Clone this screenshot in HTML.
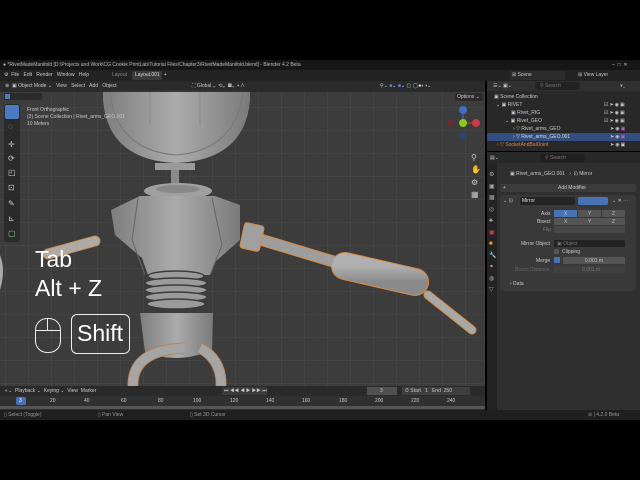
<!DOCTYPE html>
<html><head><meta charset="utf-8">
<style>
*{margin:0;padding:0;box-sizing:border-box}
body{width:640px;height:480px;background:#000;overflow:hidden;font-family:"Liberation Sans",sans-serif;font-size:5px;color:#ccc;position:relative}
.a{position:absolute}
.t{position:absolute;white-space:nowrap;font-size:5px;color:#c8c8c8}
</style></head><body>
<!-- title -->
<div class="a" style="left:0;top:60px;width:640px;height:10px;background:#161616"></div>
<div class="t" style="left:3px;top:62px;color:#bbb">● *RivetMadeManifold [D:\Projects and Work\CG Cookie PrintLab\Tutorial Files\Chapter3\RivetMadeManifold.blend] - Blender 4.2 Beta</div>
<div class="t" style="left:612px;top:62px;color:#bbb">–&nbsp;&nbsp;□&nbsp;&nbsp;✕</div>
<!-- menu bar -->
<div class="a" style="left:0;top:70px;width:640px;height:11px;background:#222"></div>
<div class="t" style="left:4px;top:72px">⚙&nbsp;&nbsp;File&nbsp;&nbsp;&nbsp;Edit&nbsp;&nbsp;&nbsp;Render&nbsp;&nbsp;&nbsp;Window&nbsp;&nbsp;&nbsp;Help</div>
<div class="t" style="left:112px;top:72px;color:#888">Layout</div>
<div class="a" style="left:132px;top:71px;width:30px;height:9px;background:#3a3a3a;border-radius:2px"></div>
<div class="t" style="left:135px;top:72px;color:#ddd">Layout.001&nbsp;&nbsp;&nbsp;+</div>
<div class="a" style="left:510px;top:71px;width:55px;height:9px;background:#2c2c2c"></div>
<div class="t" style="left:512px;top:72px">⊞ Scene</div>
<div class="t" style="left:578px;top:72px">⊞ View Layer</div>
<!-- viewport -->
<div class="a" style="left:0;top:81px;width:485px;height:305px;background:#3c3c3c;background-image:linear-gradient(#444 1px,transparent 1px),linear-gradient(90deg,#444 1px,transparent 1px);background-size:23px 23px;background-position:5px 3px"></div>
<svg class="a" style="left:0;top:81px" width="485" height="305" viewBox="0 81 485 305">
<defs><linearGradient id="g" x1="0" x2="1"><stop offset="0" stop-color="#7e7e7e"/><stop offset=".5" stop-color="#ababab"/><stop offset="1" stop-color="#7a7a7a"/></linearGradient>
<linearGradient id="h" x1="0" y1="0" x2="0" y2="1"><stop offset="0" stop-color="#b0b0b0"/><stop offset="1" stop-color="#8a8a8a"/></linearGradient></defs>
<path d="M103 90 H250 V100 Q245 160 176 163 Q108 160 103 100Z" fill="url(#g)"/>
<path d="M110 90 Q115 150 176 155 Q237 150 243 90" fill="none" stroke="#777" stroke-width="1"/>
<path d="M150 90 V125 M200 90 V125" stroke="#888" stroke-width="1"/>
<rect x="155" y="163" width="40" height="7" fill="#9a9a9a"/>
<rect x="171" y="170" width="8" height="16" fill="#8a8a8a"/>
<ellipse cx="178" cy="191" rx="34" ry="8" fill="#a0a0a0"/>
<ellipse cx="178" cy="189" rx="22" ry="4" fill="#888"/>
<path d="M140 196 H215 L240 205 L240 240 L215 262 L210 275 H148 L142 258 L115 235 L111 210Z" fill="url(#g)"/>
<path d="M138 198 L132 240 L145 275 M212 198 L222 245 L210 275" fill="none" stroke="#666" stroke-width="1"/>
<g fill="#9a9a9a" stroke="#3a3a3a" stroke-width="1.4">
<ellipse cx="176" cy="276" rx="28" ry="5"/><ellipse cx="176" cy="283" rx="31" ry="5"/><ellipse cx="176" cy="290" rx="31" ry="5"/><ellipse cx="176" cy="297" rx="31" ry="5"/><ellipse cx="176" cy="304" rx="29" ry="5"/></g>
<path d="M140 313 H213 L212 350 Q178 365 145 352Z" fill="url(#g)"/>
<path d="M185 348 Q132 350 133 386 M200 348 Q222 360 221 386" fill="none" stroke="#c07a40" stroke-width="11"/>
<path d="M185 348 Q132 350 133 386 M200 348 Q222 360 221 386" fill="none" stroke="#a5a5a5" stroke-width="9.5"/>
<g stroke-linecap="round" fill="none">
<path d="M262 240 L335 262" stroke="#d88a40" stroke-width="12"/>
<path d="M345 266 L415 282" stroke="#d88a40" stroke-width="28"/>
<path d="M428 295 L472 330" stroke="#d88a40" stroke-width="9"/>
<path d="M262 240 L335 262" stroke="#9e9e9e" stroke-width="10"/>
<path d="M345 266 L415 282" stroke="url(#h)" stroke-width="26"/>
<path d="M428 295 L472 330" stroke="#a8a8a8" stroke-width="7"/>
<path d="M48 254 L95 241" stroke="#c98a50" stroke-width="11"/>
<path d="M48 254 L95 241" stroke="#b0aaa5" stroke-width="9"/>
</g>
<rect x="242" y="224" width="20" height="26" rx="3" fill="#a0a0a0" stroke="#d88a40" stroke-width="1" transform="rotate(12 252 237)"/>
<path d="M0 255 Q6 270 0 290" fill="#aaa"/>
</svg>
<div class="a" style="left:0;top:81px;width:485px;height:11px;background:rgba(40,40,40,.9)"></div>
<div class="t" style="left:5px;top:83px">⊕&nbsp;&nbsp;▣ Object Mode ⌄&nbsp;&nbsp;&nbsp;View&nbsp;&nbsp;&nbsp;Select&nbsp;&nbsp;&nbsp;Add&nbsp;&nbsp;&nbsp;Object</div>
<div class="t" style="left:192px;top:83px">⛶ Global ⌄&nbsp;&nbsp;⟲⌄&nbsp;&nbsp;▦⌄&nbsp;&nbsp;▪ ⋀</div>
<div class="t" style="left:380px;top:83px">⚲⌄ <span style="color:#5b8fd8">■</span>⌄ <span style="color:#5b8fd8">■</span>⌄ ▢ ◯<span style="color:#fff">●</span>◐◑⌄</div>
<div class="a" style="left:4px;top:93px;width:38px;height:7px;background:#2b2b2b"></div>
<div class="a" style="left:5px;top:94px;width:5px;height:5px;background:#4a7ac0"></div>
<div class="a" style="left:455px;top:93px;width:28px;height:8px;background:#2b2b2b;border-radius:2px"></div>
<div class="t" style="left:457px;top:94px">Options ⌄</div>
<div class="t" style="left:27px;top:107px">Front Orthographic</div>
<div class="t" style="left:27px;top:114px">(3) Scene Collection | Rivet_arms_GEO.001</div>
<div class="t" style="left:27px;top:121px">10 Meters</div>
<!-- toolbar -->
<div class="a" style="left:4px;top:104px;width:16px;height:138px;background:#2a2a2a;border-radius:3px"></div>
<div class="a" style="left:5px;top:105px;width:14px;height:14px;background:#4a7ac0;border-radius:2px"></div>
<div class="t" style="left:8px;top:122px;font-size:8px">◌</div>
<div class="t" style="left:8px;top:140px;font-size:8px">✛</div>
<div class="t" style="left:8px;top:154px;font-size:8px">⟳</div>
<div class="t" style="left:8px;top:168px;font-size:8px">◰</div>
<div class="t" style="left:8px;top:183px;font-size:8px">⊡</div>
<div class="t" style="left:8px;top:199px;font-size:8px">✎</div>
<div class="t" style="left:8px;top:214px;font-size:8px">⊾</div>
<div class="t" style="left:8px;top:229px;font-size:8px;color:#8c8">▢</div>
<!-- gizmo -->
<svg class="a" style="left:440px;top:100px" width="40" height="60">
<line x1="23" y1="23" x2="23" y2="10" stroke="#4a72c0"/><line x1="23" y1="23" x2="36" y2="23" stroke="#c04050"/>
<circle cx="23" cy="10" r="4" fill="#3f6ec8"/><circle cx="36" cy="23" r="4" fill="#c83a4c"/><circle cx="10" cy="23" r="3.5" fill="#6a2a34"/><circle cx="23" cy="36" r="3.5" fill="#2c4470"/><circle cx="23" cy="23" r="4" fill="#8cc81e"/></svg>
<div class="t" style="left:471px;top:153px;font-size:8px">⚲</div>
<div class="t" style="left:471px;top:165px;font-size:8px">✋</div>
<div class="t" style="left:471px;top:178px;font-size:8px">⚙</div>
<div class="t" style="left:471px;top:190px;font-size:8px">▦</div>
<!-- overlay text -->
<div class="t" style="left:35px;top:246px;font-size:23px;color:#fff">Tab</div>
<div class="t" style="left:35px;top:275px;font-size:23px;color:#fff">Alt + Z</div>
<div class="a" style="left:35px;top:318px;width:26px;height:35px;border:1.3px solid #eee;border-radius:12px"></div>
<div class="a" style="left:35px;top:330px;width:26px;height:1.3px;background:#eee"></div>
<div class="a" style="left:47px;top:318px;width:1.3px;height:12px;background:#eee"></div>
<div class="a" style="left:71px;top:314px;width:59px;height:40px;border:1.3px solid #eee;border-radius:6px"></div>
<div class="t" style="left:77px;top:320px;font-size:23px;color:#fff">Shift</div>
<!-- outliner -->
<div class="a" style="left:487px;top:81px;width:153px;height:70px;background:#282828"></div>
<div class="a" style="left:487px;top:81px;width:153px;height:10px;background:#303030"></div>
<div class="a" style="left:535px;top:82px;width:45px;height:8px;background:#222;border-radius:3px"></div>
<div class="t" style="left:540px;top:83px;color:#777">⚲ Search</div>
<div class="t" style="left:493px;top:83px">☰⌄ ▣⌄</div>
<div class="t" style="left:620px;top:83px">⩔⌄</div>
<div class="t" style="left:494px;top:94px">▣ Scene Collection</div>
<div class="t" style="left:496px;top:102px">⌄ ▣ RIVET</div>
<div class="t" style="left:511px;top:110px">▣ Rivet_RIG</div>
<div class="t" style="left:505px;top:118px">⌄ ▣ Rivet_GEO</div>
<div class="t" style="left:513px;top:126px">› <span style="color:#e8a040">▽</span> Rivet_arms_GEO</div>
<div class="a" style="left:487px;top:133px;width:153px;height:8px;background:#334d80"></div>
<div class="t" style="left:513px;top:134px;color:#ddd">› ▽ Rivet_arms_GEO.001</div>
<div class="t" style="left:497px;top:142px;color:#e08a40">› ▽ SocketAndBallJoint</div>
<div class="t" style="left:604px;top:102px;letter-spacing:1px">☑➤◉▣</div>
<div class="t" style="left:604px;top:110px;letter-spacing:1px">☑➤◉▣</div>
<div class="t" style="left:604px;top:118px;letter-spacing:1px">☑➤◉▣</div>
<div class="t" style="left:610px;top:126px;letter-spacing:1px">➤◉<span style="color:#b060d0">▣</span></div>
<div class="t" style="left:610px;top:134px;letter-spacing:1px">➤◉<span style="color:#b060d0">▣</span></div>
<div class="t" style="left:610px;top:142px;letter-spacing:1px">➤◉▣</div>
<!-- properties -->
<div class="a" style="left:487px;top:152px;width:153px;height:258px;background:#2f2f2f"></div>
<div class="a" style="left:487px;top:152px;width:153px;height:11px;background:#282828"></div>
<div class="a" style="left:540px;top:154px;width:45px;height:8px;background:#1f1f1f;border-radius:3px"></div>
<div class="t" style="left:545px;top:155px;color:#777">⚲ Search</div>
<div class="t" style="left:490px;top:155px">▤⌄</div>
<div class="a" style="left:487px;top:163px;width:10px;height:247px;background:#232323"></div>
<div class="t" style="left:489px;top:170px;line-height:11.5px;font-size:6px;color:#aaa">⚙<br>▣<br>▦<br>◎<br>♣<br><span style="color:#c44">▣</span><br><span style="color:#e8a040">■</span><br><span style="color:#5a9ae0">🔧</span><br>⚭<br>◍<br>▽</div>
<div class="t" style="left:510px;top:171px">▣ Rivet_arms_GEO.001&nbsp;&nbsp;&nbsp;›&nbsp;&nbsp;⊡ Mirror</div>
<div class="a" style="left:500px;top:184px;width:136px;height:8px;background:#3b3b3b;border-radius:2px"></div>
<div class="t" style="left:558px;top:185px">Add Modifier</div>
<div class="t" style="left:503px;top:185px">+</div>
<div class="a" style="left:500px;top:195px;width:136px;height:96px;background:#393939;border-radius:3px"></div>
<div class="t" style="left:503px;top:198px">⌄ ⊡</div>
<div class="a" style="left:520px;top:197px;width:55px;height:8px;background:#242424;border-radius:2px"></div>
<div class="t" style="left:522px;top:198px;color:#ddd">Mirror</div>
<div class="a" style="left:578px;top:197px;width:30px;height:8px;background:#4772b3;border-radius:2px"></div>
<div class="t" style="left:612px;top:198px">⌄ ✕ ⋯</div>
<div class="t" style="left:541px;top:211px">Axis</div>
<div class="t" style="left:537px;top:219px">Bisect</div>
<div class="t" style="left:543px;top:227px;color:#777">Flip</div>
<div class="a" style="left:554px;top:210px;width:23px;height:7px;background:#4772b3"></div>
<div class="a" style="left:578px;top:210px;width:23px;height:7px;background:#545454"></div>
<div class="a" style="left:602px;top:210px;width:23px;height:7px;background:#545454"></div>
<div class="a" style="left:554px;top:218px;width:71px;height:7px;background:#545454"></div>
<div class="a" style="left:554px;top:226px;width:71px;height:7px;background:#484848"></div>
<div class="t" style="left:564px;top:211px;letter-spacing:0">X</div><div class="t" style="left:588px;top:211px">Y</div><div class="t" style="left:612px;top:211px">Z</div>
<div class="t" style="left:564px;top:219px">X</div><div class="t" style="left:588px;top:219px">Y</div><div class="t" style="left:612px;top:219px">Z</div>
<div class="t" style="left:521px;top:241px">Mirror Object</div>
<div class="a" style="left:554px;top:240px;width:71px;height:7px;background:#222"></div>
<div class="t" style="left:557px;top:241px;color:#777">▣ Object</div>
<div class="a" style="left:554px;top:249px;width:5px;height:5px;background:#555"></div>
<div class="t" style="left:562px;top:249px">Clipping</div>
<div class="t" style="left:536px;top:258px">Merge</div>
<div class="a" style="left:554px;top:257px;width:6px;height:6px;background:#4772b3"></div>
<div class="a" style="left:563px;top:257px;width:62px;height:7px;background:#545454"></div>
<div class="t" style="left:585px;top:258px">0.001 m</div>
<div class="t" style="left:515px;top:267px;color:#666">Bisect Distance</div>
<div class="a" style="left:554px;top:266px;width:71px;height:7px;background:#3f3f3f"></div>
<div class="t" style="left:582px;top:267px;color:#777">0.001 m</div>
<div class="t" style="left:510px;top:281px">› Data</div>
<!-- timeline -->
<div class="a" style="left:0;top:386px;width:485px;height:10px;background:#2a2a2a"></div>
<div class="t" style="left:5px;top:388px">◐⌄&nbsp;&nbsp;Playback ⌄&nbsp;&nbsp;Keying ⌄&nbsp;&nbsp;View&nbsp;&nbsp;Marker</div>
<div class="a" style="left:222px;top:387px;width:45px;height:8px;background:#3a3a3a"></div>
<div class="t" style="left:224px;top:388px">⏮ ◀◀ ◀ ▶ ▶▶ ⏭</div>
<div class="a" style="left:367px;top:387px;width:30px;height:8px;background:#505050"></div>
<div class="t" style="left:380px;top:388px">3</div>
<div class="a" style="left:402px;top:387px;width:68px;height:8px;background:#3e3e3e"></div>
<div class="t" style="left:405px;top:388px">⏱&nbsp;Start&nbsp;&nbsp;&nbsp;1&nbsp;&nbsp;&nbsp;End&nbsp;&nbsp;250</div>
<div class="a" style="left:0;top:396px;width:485px;height:14px;background:#303030"></div>
<div class="a" style="left:16px;top:397px;width:10px;height:8px;background:#4772b3;border-radius:2px"></div>
<div class="t" style="left:19px;top:398px;color:#fff">3</div>
<div class="t" style="left:50px;top:398px">20</div><div class="t" style="left:84px;top:398px">40</div><div class="t" style="left:121px;top:398px">60</div><div class="t" style="left:158px;top:398px">80</div><div class="t" style="left:193px;top:398px">100</div><div class="t" style="left:230px;top:398px">120</div><div class="t" style="left:266px;top:398px">140</div><div class="t" style="left:302px;top:398px">160</div><div class="t" style="left:339px;top:398px">180</div><div class="t" style="left:375px;top:398px">200</div><div class="t" style="left:411px;top:398px">220</div><div class="t" style="left:447px;top:398px">240</div>
<div class="a" style="left:0;top:406px;width:485px;height:3px;background:#555"></div>
<!-- status -->
<div class="a" style="left:0;top:410px;width:640px;height:10px;background:#1f1f1f"></div>
<div class="t" style="left:4px;top:412px;color:#999">▯ Select (Toggle)</div>
<div class="t" style="left:98px;top:412px;color:#999">▯ Pan View</div>
<div class="t" style="left:190px;top:412px;color:#999">▯ Set 3D Cursor</div>
<div class="t" style="left:588px;top:412px;color:#999">⊘ | 4.2.0 Beta</div>
</body></html>
